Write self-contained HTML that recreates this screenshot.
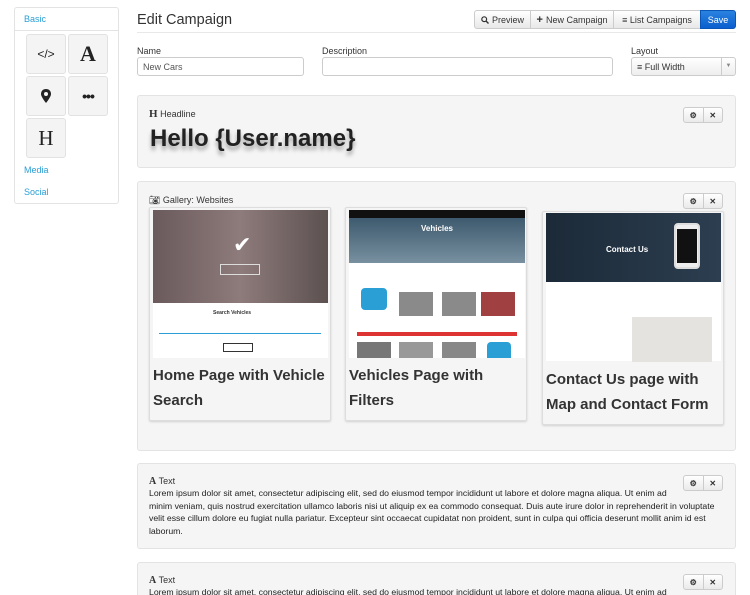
<!DOCTYPE html>
<html><head><style>
*{box-sizing:border-box;margin:0;padding:0}
html,body{width:750px;height:595px;overflow:hidden}
body{background:#fff;font-family:"Liberation Sans",sans-serif;color:#333;position:relative}
.a{position:absolute}
.side{left:14px;top:7px;width:105px;height:197px;border:1px solid #e3e3e3;border-radius:3px}
.lnk{color:#2a9fd6;font-size:9px}
.tile{width:40px;height:40px;background:#f4f4f4;border:1px solid #e2e2e2;border-radius:3px;display:flex;align-items:center;justify-content:center;font-family:"Liberation Serif",serif;font-weight:bold;color:#222}
.btn{top:10px;height:19px;border:1px solid #ccc;background:linear-gradient(#fff,#e8e8e8);font-size:9px;color:#333;display:flex;align-items:center;justify-content:center;gap:3px}
.lbl{font-size:9px;top:46px}
.inp{top:57px;height:19px;border:1px solid #ccc;border-radius:3px;font-size:9px;color:#555;padding:4px 5px}
.pan{left:137px;width:599px;background:#f5f5f5;border:1px solid #e3e3e3;border-radius:3px}
.tb{width:40px;height:16px;border:1px solid #ccc;border-radius:3px;background:linear-gradient(#fff,#eaeaea);display:flex}
.tb span{flex:1;display:flex;align-items:center;justify-content:center;font-size:8px;font-weight:bold;color:#333}
.tb span:first-child{border-right:1px solid #ccc}
.ph{font-size:9px;color:#333}
.card{background:#f5f5f5;border:1px solid #ddd;box-shadow:0 1px 2px rgba(0,0,0,.15);border-radius:2px}
.ct{font-size:15px;font-weight:bold;color:#333;line-height:24.5px;white-space:nowrap}
.lorem{font-size:8.7px;line-height:12.6px;color:#222;left:11px;white-space:nowrap}
</style></head><body>
<div class="a side">
 <div class="a lnk" style="left:9px;top:6px">Basic</div>
 <div class="a" style="left:0;top:22px;width:103px;border-top:1px solid #e3e3e3"></div>
 <div class="a tile" style="left:11px;top:26px;font-family:'Liberation Sans';font-size:12px;font-weight:normal">&lt;/&gt;</div>
 <div class="a tile" style="left:53px;top:26px;font-size:22px">A</div>
 <div class="a tile" style="left:11px;top:68px"><svg width="10" height="14" viewBox="0 0 10 14"><path d="M5 0C2 0 0 2 0 5c0 3 5 9 5 9s5-6 5-9C10 2 8 0 5 0z" fill="#222"/><circle cx="5" cy="5" r="2" fill="#f4f4f4"/></svg></div>
 <div class="a tile" style="left:53px;top:68px;font-size:14px;letter-spacing:-1px;font-family:'Liberation Sans'">•••</div>
 <div class="a tile" style="left:11px;top:110px;font-size:21px;font-weight:normal">H</div>
 <div class="a lnk" style="left:9px;top:157px">Media</div>
 <div class="a lnk" style="left:9px;top:179px">Social</div>
</div>

<div class="a" style="left:137px;top:12px;font-size:14.5px;color:#333">Edit Campaign</div>
<div class="a" style="left:137px;top:32px;width:599px;border-top:1px solid #e8e8e8"></div>
<div class="a btn" style="left:474px;width:57px;border-radius:3px 0 0 3px"><svg width="8" height="8" viewBox="0 0 8 8"><circle cx="3.2" cy="3.2" r="2.4" fill="none" stroke="#333" stroke-width="1.2"/><path d="M5 5l2.5 2.5" stroke="#333" stroke-width="1.4"/></svg>Preview</div>
<div class="a btn" style="left:530px;width:84px"><b style="font-size:11px">+</b>New Campaign</div>
<div class="a btn" style="left:613px;width:88px">&#8801; List Campaigns</div>
<div class="a btn" style="left:700px;width:36px;background:linear-gradient(#2a82e0,#0b5fcf);border-color:#0a56b8;color:#fff;border-radius:0 3px 3px 0">Save</div>

<div class="a lbl" style="left:137px">Name</div>
<div class="a lbl" style="left:322px">Description</div>
<div class="a lbl" style="left:631px">Layout</div>
<div class="a inp" style="left:137px;width:167px">New Cars</div>
<div class="a inp" style="left:322px;width:291px"></div>
<div class="a inp" style="left:631px;width:105px;background:linear-gradient(#fff,#eee);color:#333">&#8801; Full Width<span class="a" style="right:0;top:0;width:14px;height:17px;border-left:1px solid #ccc;font-size:6px;color:#888;text-align:center;line-height:17px">▼</span></div>

<div class="a pan" style="top:95px;height:73px">
 <div class="a ph" style="left:11px;top:12px"><b style="font-family:'Liberation Serif';font-size:11px">H</b> Headline</div>
 <div class="a" style="left:12px;top:29px;font-size:24px;font-weight:bold;color:#222;text-shadow:0 4px 4px rgba(0,0,0,.35)">Hello {User.name}</div>
 <div class="a tb" style="left:545px;top:11px"><span>⚙</span><span>✕</span></div>
</div>

<div class="a pan" style="top:181px;height:270px">
 <div class="a ph" style="left:11px;top:13px">&#x1F4F7;&#xFE0E; Gallery: Websites</div>
 <div class="a tb" style="left:545px;top:11px"><span>⚙</span><span>✕</span></div>
 <div class="a card" style="left:11px;top:25px;width:182px;height:214px">
  <div class="a" style="left:3px;top:2px;width:175px;height:148px;background:#fff">
   <div class="a" style="left:0;top:0;width:175px;height:93px;background:linear-gradient(90deg,#6a5a5c,#8e7b7b 50%,#5c5150)"></div>
   <div class="a" style="left:80px;top:22px;color:#fff;font-size:22px">✔</div>
   <div class="a" style="left:67px;top:54px;width:40px;height:11px;border:1px solid #ddd"></div>
   <div class="a" style="left:60px;top:100px;font-size:5px;font-weight:bold">Search Vehicles</div>
   <div class="a" style="left:6px;top:123px;width:162px;border-top:1px solid #2a9fd6"></div>
   <div class="a" style="left:70px;top:133px;width:30px;height:9px;border:1px solid #333"></div>
  </div>
  <div class="a ct" style="left:3px;top:156px">Home Page with Vehicle<br>Search</div>
 </div>
 <div class="a card" style="left:207px;top:25px;width:182px;height:214px">
  <div class="a" style="left:3px;top:2px;width:176px;height:148px;background:#fff">
   <div class="a" style="left:0;top:0;width:176px;height:8px;background:#111"></div>
   <div class="a" style="left:0;top:8px;width:176px;height:45px;background:linear-gradient(#3e5a6e,#7890a0);color:#fff;font-size:8px;font-weight:bold;text-align:center;padding-top:6px">Vehicles</div>
   <div class="a" style="left:12px;top:78px;width:26px;height:22px;background:#2a9fd6;border-radius:4px"></div>
   <div class="a" style="left:50px;top:82px;width:34px;height:24px;background:#8a8a8a"></div>
   <div class="a" style="left:93px;top:82px;width:34px;height:24px;background:#8a8a8a"></div>
   <div class="a" style="left:132px;top:82px;width:34px;height:24px;background:#a04040"></div>
   <div class="a" style="left:8px;top:122px;width:160px;height:4px;background:#d33"></div>
   <div class="a" style="left:8px;top:132px;width:34px;height:16px;background:#777"></div>
   <div class="a" style="left:50px;top:132px;width:34px;height:16px;background:#999"></div>
   <div class="a" style="left:93px;top:132px;width:34px;height:16px;background:#888"></div>
   <div class="a" style="left:138px;top:132px;width:24px;height:16px;background:#2a9fd6;border-radius:4px 4px 0 0"></div>
  </div>
  <div class="a ct" style="left:3px;top:156px">Vehicles Page with<br>Filters</div>
 </div>
 <div class="a card" style="left:404px;top:29px;width:182px;height:214px">
  <div class="a" style="left:3px;top:1px;width:175px;height:148px;background:#fff">
   <div class="a" style="left:0;top:0;width:175px;height:69px;background:linear-gradient(90deg,#1c2a38,#2c3e50);color:#fff;font-size:8px;font-weight:bold;padding:32px 0 0 60px">Contact Us</div>
   <div class="a" style="left:128px;top:10px;width:26px;height:46px;background:#eee;border:2px solid #ddd;border-radius:4px"><div style="margin:4px 1px;height:34px;background:#111"></div></div>
   <div class="a" style="left:86px;top:104px;width:80px;height:45px;background:#e5e3df"></div>
  </div>
  <div class="a ct" style="left:3px;top:156px">Contact Us page with<br>Map and Contact Form</div>
 </div>
</div>

<div class="a pan" style="top:463px;height:86px">
 <div class="a ph" style="left:11px;top:12px"><b style="font-family:'Liberation Serif';font-size:10px">A</b> Text</div>
 <div class="a tb" style="left:545px;top:11px"><span>⚙</span><span>✕</span></div>
 <div class="a lorem" style="top:23px">Lorem ipsum dolor sit amet, consectetur adipiscing elit, sed do eiusmod tempor incididunt ut labore et dolore magna aliqua. Ut enim ad<br>minim veniam, quis nostrud exercitation ullamco laboris nisi ut aliquip ex ea commodo consequat. Duis aute irure dolor in reprehenderit in voluptate<br>velit esse cillum dolore eu fugiat nulla pariatur. Excepteur sint occaecat cupidatat non proident, sunt in culpa qui officia deserunt mollit anim id est<br>laborum.</div>
</div>
<div class="a pan" style="top:562px;height:60px">
 <div class="a ph" style="left:11px;top:12px"><b style="font-family:'Liberation Serif';font-size:10px">A</b> Text</div>
 <div class="a tb" style="left:545px;top:11px"><span>⚙</span><span>✕</span></div>
 <div class="a lorem" style="top:23px">Lorem ipsum dolor sit amet, consectetur adipiscing elit, sed do eiusmod tempor incididunt ut labore et dolore magna aliqua. Ut enim ad</div>
</div>
</body></html>
